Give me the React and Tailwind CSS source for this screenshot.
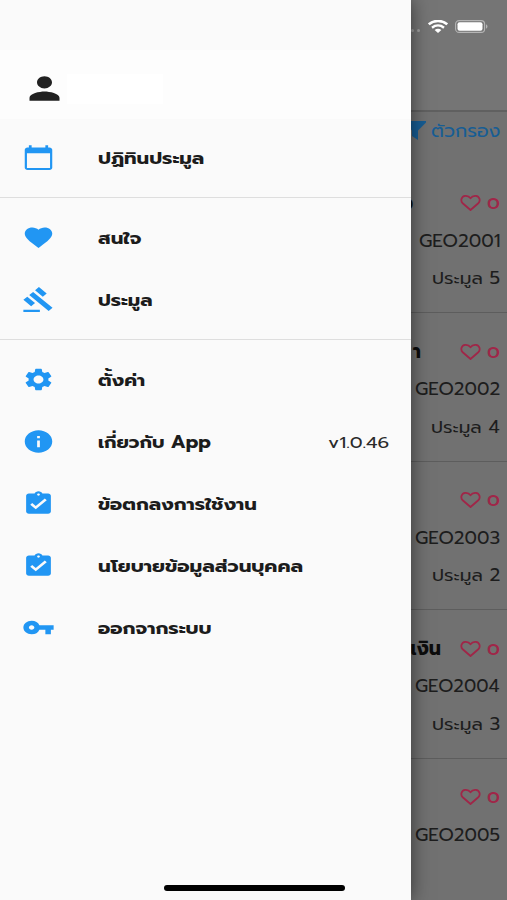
import { useLayoutEffect, useRef, useState } from "react";
import {
  MdAssignmentTurnedIn,
  MdFavorite,
  MdGavel,
  MdInfo,
  MdPerson,
  MdSettings,
  MdVpnKey,
} from "react-icons/md";

const menuGroups = [
  [{ label: "ปฏิทินประมูล", icon: CalendarIcon, width: 106.5 }],
  [
    { label: "สนใจ", icon: MdFavorite, width: 43 },
    { label: "ประมูล", icon: MdGavel, width: 55 },
  ],
  [
    { label: "ตั้งค่า", icon: MdSettings, width: 47 },
    { label: "เกี่ยวกับ App", icon: MdInfo, width: 113, extra: "v1.0.46" },
    { label: "ข้อตกลงการใช้งาน", icon: MdAssignmentTurnedIn, width: 159 },
    { label: "นโยบายข้อมูลส่วนบุคคล", icon: MdAssignmentTurnedIn, width: 204.5 },
    { label: "ออกจากระบบ", icon: MdVpnKey, width: 114 },
  ],
];

const auctions = [
  { code: "GEO2001", codeWidth: 81, bids: 5, bidsWidth: 68, title: "ง", titleEnd: "pr-[47px]" },
  { code: "GEO2002", codeWidth: 85, bids: 4, bidsWidth: 69, title: "า", titleEnd: "pr-[39px]" },
  { code: "GEO2003", codeWidth: 85, bids: 2, bidsWidth: 68, title: "", titleEnd: "" },
  { code: "GEO2004", codeWidth: 85, bids: 3, bidsWidth: 68, title: "เงิน", titleEnd: "pr-[19px]" },
  { code: "GEO2005", codeWidth: 85, bids: null, bidsWidth: 0, title: "", titleEnd: "" },
];

function CalendarIcon(props) {
  return (
    <svg viewBox="0 0 24 24" fill="currentColor" {...props}>
      <path d="M20 3h-1V1h-2v2H7V1H5v2H4c-1.1 0-2 .9-2 2v16c0 1.1.9 2 2 2h16c1.1 0 2-.9 2-2V5c0-1.1-.9-2-2-2zm.4 18.400H3.600V8.300h16.800z" />
    </svg>
  );
}

// Extended lettering: the text is widened until it fills the given width.
function WideText({ width, className, children }) {
  const ref = useRef(null);
  const [scale, setScale] = useState(1);

  useLayoutEffect(() => {
    setScale(width / ref.current.offsetWidth);
  }, [width, children]);

  return (
    <span className="inline-block shrink-0 whitespace-nowrap" style={{ width }}>
      <span
        ref={ref}
        className={`inline-block origin-left ${className}`}
        style={{ transform: `scaleX(${scale})` }}
      >
        {children}
      </span>
    </span>
  );
}

function MenuRow({ item }) {
  const Icon = item.icon;

  return (
    <div className="flex h-[62px] items-center pr-[22px] pl-[22px]">
      <Icon
        className="mb-px h-[27px] w-[33px] shrink-0 text-[#2196f3]"
        preserveAspectRatio="none"
      />
      <div className="ml-[43px] flex flex-1 items-center justify-between pt-px">
        <WideText width={item.width} className="text-[17px] font-bold text-[#1c1c1c]">
          {item.label}
        </WideText>
        {item.extra ? (
          <WideText width={61} className="text-base text-[#2a2a2a]">
            {item.extra}
          </WideText>
        ) : null}
      </div>
    </div>
  );
}

function Drawer() {
  return (
    <aside className="absolute inset-y-0 left-0 flex w-[411px] flex-col bg-[#fafafa] shadow-[0_0_18px_rgba(0,0,0,0.55)]">
      <div className="mt-[50px] flex h-[69px] items-center bg-[#fdfdfd] pt-2 pl-[22px]">
        <MdPerson className="h-[37px] w-[45px] text-[#212121]" preserveAspectRatio="none" />
        <div className="h-[30px] w-24 bg-white" />
      </div>
      <nav className="pt-2">
        {menuGroups.map((group, index) => (
          <div
            key={index}
            className={index > 0 ? "mt-2 border-t border-[#dedede] pt-[9px]" : ""}
          >
            {group.map((item) => (
              <MenuRow key={item.label} item={item} />
            ))}
          </div>
        ))}
      </nav>
      <div className="mt-auto mb-[9px] ml-[164px] h-[6px] w-[181px] rounded-full bg-black" />
    </aside>
  );
}

function StatusIcons() {
  return (
    <div className="flex items-center justify-end pt-5 pr-[19px]">
      <span className="mt-2 mr-2 flex gap-[3px]">
        <span className="size-[3px] rounded-full bg-[#a0a0a0]" />
        <span className="size-[3px] rounded-full bg-[#a0a0a0]" />
      </span>
      <svg className="mr-[7px] h-[13px] w-5" viewBox="0 0 20 13" fill="none" stroke="#fff">
        <path d="M.8 4.300C6-.2 14-.2 19.200 4.300" strokeWidth="2.500" />
        <path d="M4 7.700c3.600-2.900 8.400-2.900 12 0" strokeWidth="2.400" />
        <path d="M6.600 10c2-1.600 4.800-1.600 6.800 0L10 13Z" fill="#fff" stroke="none" />
      </svg>
      <svg className="h-[13px] w-[33px]" viewBox="0 0 33 13" fill="none">
        <rect x=".6" y=".6" width="29" height="11.800" rx="3.500" stroke="#b5b5b5" strokeWidth="1.100" />
        <rect x="2.500" y="2.300" width="25" height="8.400" rx="2" fill="#fff" />
        <path d="M31 4.300c2 .8 2 3.600 0 4.400Z" fill="#b5b5b5" />
      </svg>
    </div>
  );
}

function AuctionRow({ auction }) {
  return (
    <div className="flex h-[148.5px] flex-col items-end border-b border-[#5d5d5d] pt-5 pr-[7px]">
      <div className="flex h-[38px] items-center">
        {auction.title ? (
          <span className={`pt-px text-[19px] font-bold text-[#0c0c0c] ${auction.titleEnd}`}>
            {auction.title}
          </span>
        ) : null}
        <svg
          className="mr-[6px] mb-px h-4 w-[21px]"
          viewBox="0 0 20 16"
          fill="none"
          stroke="#a02648"
          strokeWidth="1.8"
          strokeLinejoin="round"
        >
          <path d="M10 15 2.200 8.300C-.3 5.800.8 1.300 4.700.9 7 .8 8.800 1.600 10 3.200 11.200 1.600 13 .8 15.300.9c3.900.4 5 4.900 2.500 7.400Z" />
        </svg>
        <WideText width={13} className="pt-px text-base font-medium text-[#a02648]">
          0
        </WideText>
      </div>
      <div className="flex h-[38px] items-center">
        <WideText width={auction.codeWidth} className="text-[17px]">
          {auction.code}
        </WideText>
      </div>
      {auction.bids !== null ? (
        <div className="flex h-[37px] items-center">
          <WideText width={auction.bidsWidth} className="text-[17px]">
            ประมูล {auction.bids}
          </WideText>
        </div>
      ) : null}
    </div>
  );
}

export default function App() {
  return (
    <div className="relative h-[900px] w-[507px] overflow-hidden bg-[#717171] font-['Prompt','Noto_Sans_Thai','Noto_Sans',sans-serif] text-[#1d1d1d]">
      <header className="h-[112px] border-b-2 border-[#606060] bg-[#757575]">
        <StatusIcons />
      </header>
      <main>
        <div className="flex h-[52.5px] items-start justify-end pt-[5px] pr-[7px] text-[#175d94]">
          <svg className="mt-[4px] mr-[5px] h-[19px] w-[22px]" viewBox="0 0 22 19" fill="currentColor">
            <path d="M0 0h22v1.500l-8 8V19l-6-4V9.500l-8-8Z" />
          </svg>
          <WideText width={69} className="pt-px text-[18px]">
            ตัวกรอง
          </WideText>
        </div>
        {auctions.map((auction) => (
          <AuctionRow key={auction.code} auction={auction} />
        ))}
      </main>
      <Drawer />
    </div>
  );
}
